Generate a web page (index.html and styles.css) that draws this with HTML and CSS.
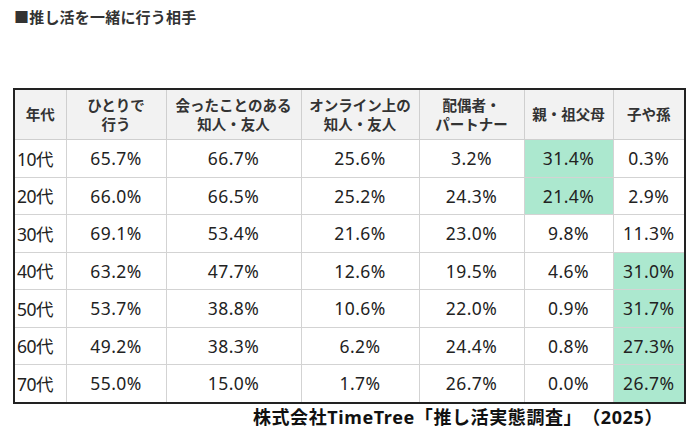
FILE: index.html
```html
<!DOCTYPE html>
<html lang="ja">
<head>
<meta charset="utf-8">
<link rel="stylesheet" href="styles.css">
</head>
<body>
<div class="page">
  <h1 class="title">■推し活を一緒に行う相手</h1>
  <table class="data">
    <colgroup>
      <col class="c-age"><col class="c1"><col class="c2"><col class="c3"><col class="c4"><col class="c5"><col class="c6">
    </colgroup>
    <thead>
      <tr>
        <th>年代</th>
        <th>ひとりで<br>行う</th>
        <th>会ったことのある<br>知人・友人</th>
        <th>オンライン上の<br>知人・友人</th>
        <th>配偶者・<br>パートナー</th>
        <th>親・祖父母</th>
        <th>子や孫</th>
      </tr>
    </thead>
    <tbody>
      <tr><td class="age">10代</td><td>65.7%</td><td>66.7%</td><td>25.6%</td><td>3.2%</td><td class="hl">31.4%</td><td>0.3%</td></tr>
      <tr><td class="age">20代</td><td>66.0%</td><td>66.5%</td><td>25.2%</td><td>24.3%</td><td class="hl">21.4%</td><td>2.9%</td></tr>
      <tr><td class="age">30代</td><td>69.1%</td><td>53.4%</td><td>21.6%</td><td>23.0%</td><td>9.8%</td><td>11.3%</td></tr>
      <tr><td class="age">40代</td><td>63.2%</td><td>47.7%</td><td>12.6%</td><td>19.5%</td><td>4.6%</td><td class="hl">31.0%</td></tr>
      <tr><td class="age">50代</td><td>53.7%</td><td>38.8%</td><td>10.6%</td><td>22.0%</td><td>0.9%</td><td class="hl">31.7%</td></tr>
      <tr><td class="age">60代</td><td>49.2%</td><td>38.3%</td><td>6.2%</td><td>24.4%</td><td>0.8%</td><td class="hl">27.3%</td></tr>
      <tr><td class="age">70代</td><td>55.0%</td><td>15.0%</td><td>1.7%</td><td>26.7%</td><td>0.0%</td><td class="hl">26.7%</td></tr>
    </tbody>
  </table>
  <p class="source">株式会社TimeTree「推し活実態調査」（2025）</p>
</div>
</body>
</html>
```

FILE: styles.css
```css
html, body {
  margin: 0;
  padding: 0;
  background: #ffffff;
}
body {
  font-family: "Noto Sans", "Noto Sans CJK JP", sans-serif;
  color: #222;
}
.page {
  width: 700px;
  height: 435px;
  padding: 0 0 0 13px;
  box-sizing: border-box;
}
.title {
  margin: 0;
  padding: 8px 0 0 1px;
  height: 80px;
  box-sizing: border-box;
  font-size: 15px;
  font-weight: 700;
  line-height: 18px;
  color: #333;
  letter-spacing: 0.2px;
}
.data {
  margin-top: 8px;
  border-collapse: collapse;
  table-layout: fixed;
  width: 671px;
  border: 2px solid #222;
}
.c-age { width: 52px; }
.c1 { width: 100px; }
.c2 { width: 135px; }
.c3 { width: 118px; }
.c4 { width: 105px; }
.c5 { width: 89px; }
.c6 { width: 72px; }
.data th {
  background: #f2f2f2;
  height: 49px;
  padding: 0;
  font-size: 14.5px;
  font-weight: 700;
  line-height: 19px;
  color: #333;
  border: 1.5px solid #cfcfcf;
  text-align: center;
  vertical-align: middle;
}
.data td {
  height: 36.5px;
  padding: 0;
  font-size: 17.5px;
  letter-spacing: 0.4px;
  text-align: center;
  vertical-align: middle;
  border: 1.5px solid #d3d3d3;
  color: #222;
}
.data td.age {
  text-align: left;
  padding-left: 2px;
  letter-spacing: -0.5px;
}
.data td.hl {
  background: #ace8cf;
}
.source {
  margin: 1px 37px 0 0;
  text-align: right;
  font-size: 18px;
  font-weight: 700;
  line-height: 24px;
  color: #111;
  letter-spacing: 0.6px;
  text-spacing-trim: space-all;
}
```
